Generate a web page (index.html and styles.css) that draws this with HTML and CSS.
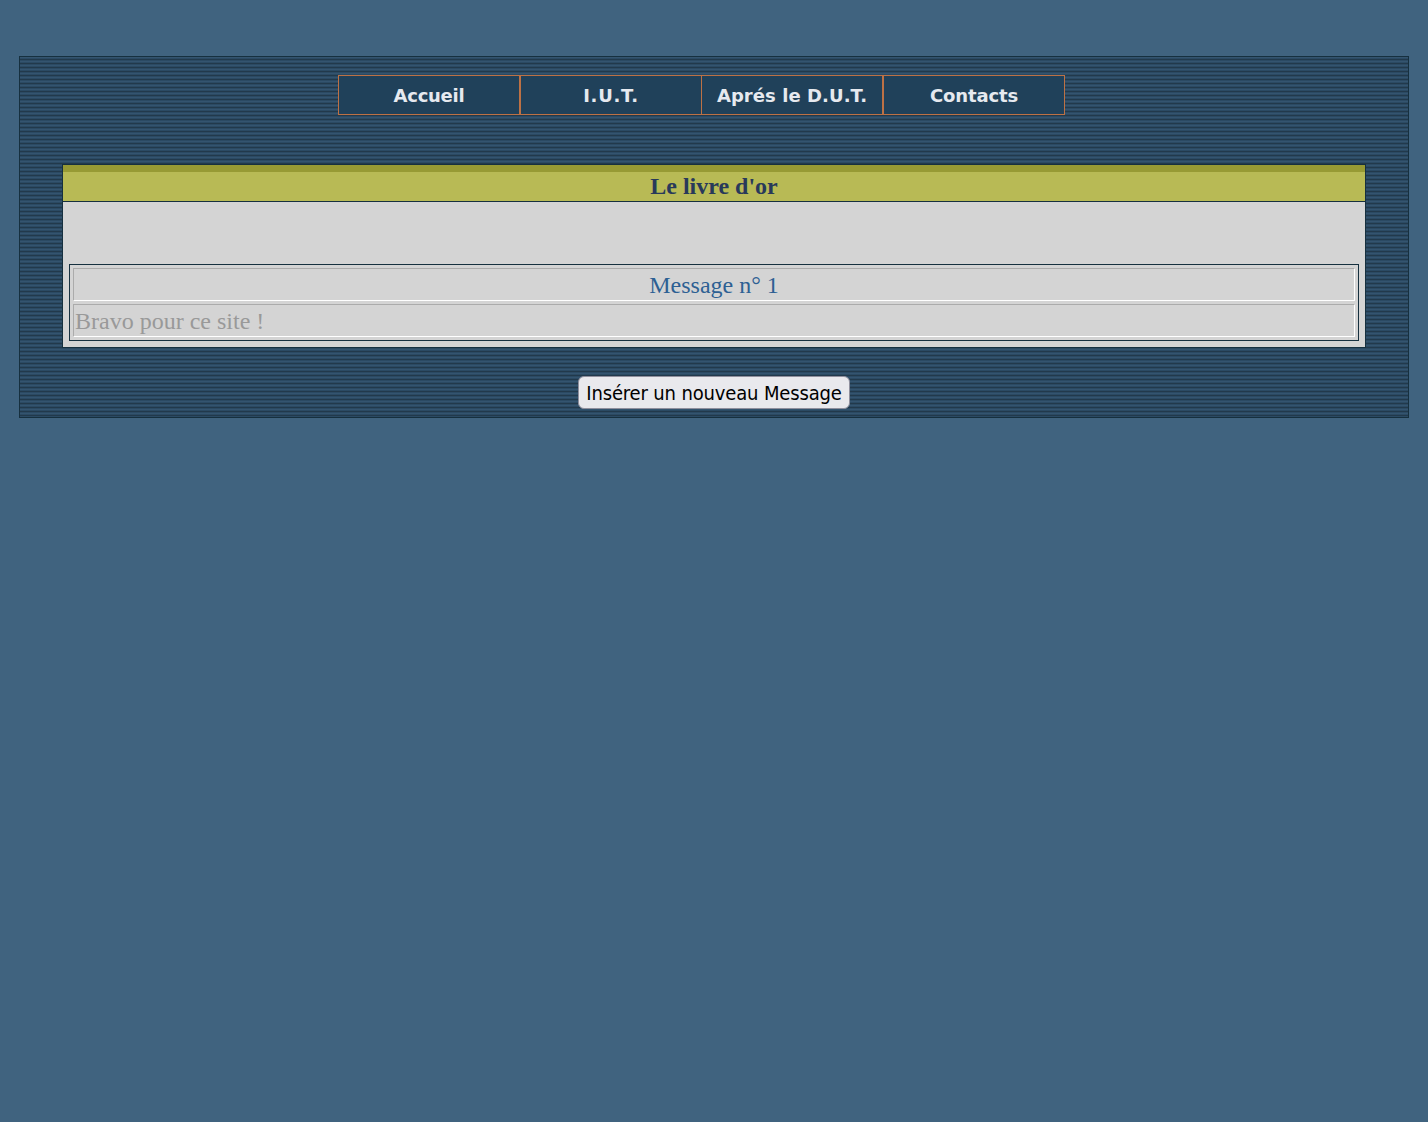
FILE: index.html
```html
<!DOCTYPE html>
<html lang="fr">
<head>
<meta charset="utf-8">
<title>Le livre d'or</title>
<link rel="stylesheet" href="styles.css">
</head>
<body>
<div class="panel">
  <nav class="nav">
    <a class="nav-item ls-tight">Accueil</a>
    <a class="nav-item ls-dots">I.U.T.</a>
    <a class="nav-item item-thin ls-wide">Aprés le D.U.T.</a>
    <a class="nav-item ls-mid">Contacts</a>
  </nav>
  <section class="book">
    <h1 class="book-title">Le livre d'or</h1>
    <div class="book-body">
      <div class="messages">
        <div class="cell cell-title">Message n° 1</div>
        <div class="cell cell-text">Bravo pour ce site !</div>
      </div>
    </div>
  </section>
  <div class="actions"><button class="btn" type="button">Insérer un nouveau Message</button></div>
</div>
</body>
</html>
```
FILE: styles.css
```css
html, body { margin: 0; padding: 0; }
body {
  background: #40637f;
  min-height: 1122px;
  padding: 56px 19px 0;
  box-sizing: border-box;
  font-family: "Liberation Serif", serif;
}
.panel {
  height: 362px;
  box-sizing: border-box;
  border: 1px solid #16303f;
  background: repeating-linear-gradient(to bottom, #34546f 0, #34546f 1px, #2b4a63 1px, #2b4a63 2px, #22394b 2px, #22394b 3px, #2b4a63 3px, #2b4a63 4px);
  padding-top: 18px;
}
.nav { display: flex; height: 40px; margin-left: 318px; }
.nav-item {
  width: 182px;
  box-sizing: border-box;
  display: flex;
  align-items: center;
  justify-content: center;
  background: #20415a;
  border: 1px solid #bd7145;
  color: #e6e9ef;
  font: bold 18px "DejaVu Sans", sans-serif;
}
.item-thin { margin-left: -1px; width: 182px; }
.ls-tight { letter-spacing: -0.26px; }
.ls-dots { letter-spacing: 0.7px; }
.ls-wide { letter-spacing: 0.07px; }
.ls-mid { letter-spacing: -0.15px; }
.book {
  margin: 49px 42px 0;
  border: 1px solid #16303f;
  background: #d4d4d4;
}
.book-title {
  margin: 0;
  height: 37px;
  box-sizing: border-box;
  border-top: 7px solid #979a34;
  border-bottom: 1px solid #16303f;
  background: #b8ba55;
  color: #28395a;
  font: bold 24px/28px "Liberation Serif", serif;
  text-align: center;
}
.book-body { padding: 62px 6px 6px; }
.messages {
  border: 1px solid #16303f;
  padding: 3px;
  display: flex;
  flex-direction: column;
  gap: 3px;
}
.cell {
  height: 33px;
  box-sizing: border-box;
  border: 1px solid;
  border-color: #ababab #fff #fff #ababab;
  font-size: 24px;
  line-height: 32px;
}
.cell-title { text-align: center; color: #2d6093; }
.cell-text { color: #999; padding-left: 1px; }
.actions { display: flex; justify-content: center; margin-top: 28px; }
.btn {
  width: 272px;
  height: 33px;
  padding: 1px 0 0;
  background: #e9e9ed;
  border: 1px solid #8f8f9d;
  border-radius: 6px;
  color: #000;
  font: 20px "DejaVu Sans Condensed", sans-serif;
  letter-spacing: -0.15px;
}
```
